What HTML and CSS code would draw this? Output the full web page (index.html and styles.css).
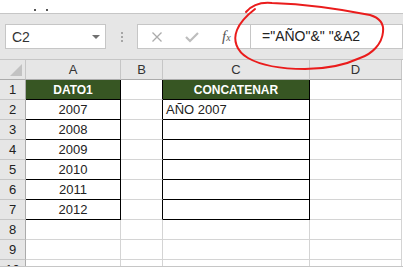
FILE: index.html
```html
<!DOCTYPE html>
<html lang="es">
<head>
    <meta charset="UTF-8">
    <title>Concatenar</title>
    <link rel="stylesheet" href="styles.css">
</head>
<body>
    <div class="topbar">
        <span class="speck s1"></span>
        <span class="speck s2"></span>
    </div>

    <div class="formula-row">
        <div class="namebox">
            <span>C2</span>
            <span class="caret"></span>
        </div>
        <div class="grip">
            <span></span><span></span><span></span>
        </div>
        <div class="fxbox">
            <svg class="icon-x" width="12" height="12" viewBox="0 0 12 12">
                <path d="M1.5 1.5 L10.5 10.5 M10.5 1.5 L1.5 10.5" stroke="#ababab" stroke-width="1.3" fill="none"/>
            </svg>
            <svg class="icon-ok" width="14" height="12" viewBox="0 0 14 12">
                <path d="M1 6 L5 10 L13 2" stroke="#bdbdbd" stroke-width="2.2" fill="none"/>
            </svg>
            <span class="fx">f<small>x</small></span>
        </div>
        <div class="formula">="AÑO"&amp;" "&amp;A2</div>
    </div>

    <div class="sheet">
        <div class="grid">
            <!-- column headers -->
            <div class="hd corner"><span class="tri"></span></div>
            <div class="hd">A</div>
            <div class="hd">B</div>
            <div class="hd">C</div>
            <div class="hd">D</div>

            <!-- row 1 -->
            <div class="rh">1</div>
            <div class="c title box">DATO1</div>
            <div class="c edge"></div>
            <div class="c title box">CONCATENAR</div>
            <div class="c"></div>

            <div class="rh">2</div>
            <div class="c num box">2007</div>
            <div class="c edge"></div>
            <div class="c box">AÑO 2007</div>
            <div class="c"></div>

            <div class="rh">3</div>
            <div class="c num box">2008</div>
            <div class="c edge"></div>
            <div class="c box"></div>
            <div class="c"></div>

            <div class="rh">4</div>
            <div class="c num box">2009</div>
            <div class="c edge"></div>
            <div class="c box"></div>
            <div class="c"></div>

            <div class="rh">5</div>
            <div class="c num box">2010</div>
            <div class="c edge"></div>
            <div class="c box"></div>
            <div class="c"></div>

            <div class="rh">6</div>
            <div class="c num box">2011</div>
            <div class="c edge"></div>
            <div class="c box"></div>
            <div class="c"></div>

            <div class="rh">7</div>
            <div class="c num box">2012</div>
            <div class="c edge"></div>
            <div class="c box"></div>
            <div class="c"></div>

            <div class="rh">8</div>
            <div class="c"></div>
            <div class="c"></div>
            <div class="c"></div>
            <div class="c"></div>

            <div class="rh">9</div>
            <div class="c"></div>
            <div class="c"></div>
            <div class="c"></div>
            <div class="c"></div>

            <div class="rh">10</div>
            <div class="c"></div>
            <div class="c"></div>
            <div class="c"></div>
            <div class="c"></div>
        </div>
    </div>

    <!-- hand-drawn red circle over the formula -->
    <svg class="scribble" width="403" height="268" viewBox="0 0 403 268">
        <path d="M246 12 C252 5, 262 2, 272 3 C300 4, 340 9, 370 15 C380 18, 384 24, 383 32 C382 44, 372 54, 360 58 C345 65, 325 69, 305 69 C285 69, 262 66, 248 58 C236 51, 233 40, 237 30 C240 22, 246 16, 255 9"
              stroke="#ea1c1c" stroke-width="2" fill="none" stroke-linecap="round"/>
    </svg>
</body>
</html>
```

FILE: styles.css
```css
body {
    margin: 0;
    width: 403px;
    height: 268px;
    overflow: hidden;
    position: relative;
    background: #fff;
    font-family: "Liberation Sans", Arial, sans-serif;
    color: #222;
}

.topbar {
    height: 13px;
    background: #fff;
    border-bottom: 1px solid #c6c6c6;
    position: relative;
}

.speck {
    position: absolute;
    top: 9px;
    width: 2px;
    height: 2px;
    background: #555;
}

.s1 { left: 34px; }
.s2 { left: 46px; }

.formula-row {
    height: 45px;
    box-sizing: border-box;
    padding-top: 10px;
    background: #e6e6e6;
    display: flex;
    align-items: flex-start;
}

.namebox {
    margin-left: 5px;
    width: 101px;
    height: 25px;
    box-sizing: border-box;
    border: 1px solid #c6c6c6;
    background: #fff;
    display: flex;
    align-items: center;
    justify-content: space-between;
    padding: 0 5px 0 6px;
    font-size: 14px;
    color: #333;
}

.caret {
    width: 0;
    height: 0;
    border-left: 4px solid transparent;
    border-right: 4px solid transparent;
    border-top: 4px solid #707070;
}

.grip {
    width: 31px;
    height: 25px;
    display: flex;
    flex-direction: column;
    align-items: center;
    justify-content: center;
    gap: 2px;
}

.grip span {
    width: 2px;
    height: 2px;
    background: #a6a6a6;
}

.fxbox {
    width: 113px;
    height: 25px;
    box-sizing: border-box;
    border: 1px solid #c6c6c6;
    border-right: none;
    background: #fff;
    display: flex;
    align-items: center;
}

.icon-x {
    margin-left: 13px;
}

.icon-ok {
    margin-left: 22px;
}

.fx {
    margin-left: 23px;
    font-family: "Liberation Serif", serif;
    font-style: italic;
    font-size: 15px;
    color: #555;
}

.fx small {
    font-size: 10px;
}

.formula {
    flex: 1;
    height: 25px;
    box-sizing: border-box;
    border: 1px solid #c6c6c6;
    background: #fff;
    padding-left: 11px;
    font-size: 14px;
    line-height: 23px;
    color: #222;
}

.sheet {
    height: 208px;
    box-sizing: border-box;
    border-top: 1px solid #c6c6c6;
    border-bottom: 1px solid #c6c6c6;
    overflow: hidden;
}

.grid {
    display: grid;
    grid-template-columns: 26px 95px 42px 147px 92px;
    grid-auto-rows: 20px;
}

.grid > div {
    box-sizing: border-box;
    border-right: 1px solid #d4d4d4;
    border-bottom: 1px solid #d4d4d4;
    font-size: 13px;
    line-height: 20px;
    white-space: nowrap;
    overflow: hidden;
}

.grid > .hd {
    background: #e6e6e6;
    border-right-color: #c6c6c6;
    border-bottom-color: #ababab;
    text-align: center;
    color: #333;
    line-height: 19px;
}

.corner {
    position: relative;
}

.tri {
    position: absolute;
    right: 3px;
    bottom: 3px;
    width: 0;
    height: 0;
    border-left: 12px solid transparent;
    border-bottom: 12px solid #c2c2c2;
}

.grid > .rh {
    background: #e6e6e6;
    border-right-color: #ababab;
    border-bottom-color: #c6c6c6;
    text-align: center;
    color: #222;
}

.grid > .box {
    border-right-color: #000;
    border-bottom-color: #000;
    padding-left: 3px;
}

.grid > .edge {
    border-right-color: #000;
}

.grid > .title {
    background: #375623;
    color: #fff;
    font-weight: bold;
    font-size: 12px;
    text-align: center;
    padding-left: 0;
}

.grid > .num {
    text-align: center;
    padding-left: 0;
}

.scribble {
    position: absolute;
    top: 0;
    left: 0;
    pointer-events: none;
}
```
